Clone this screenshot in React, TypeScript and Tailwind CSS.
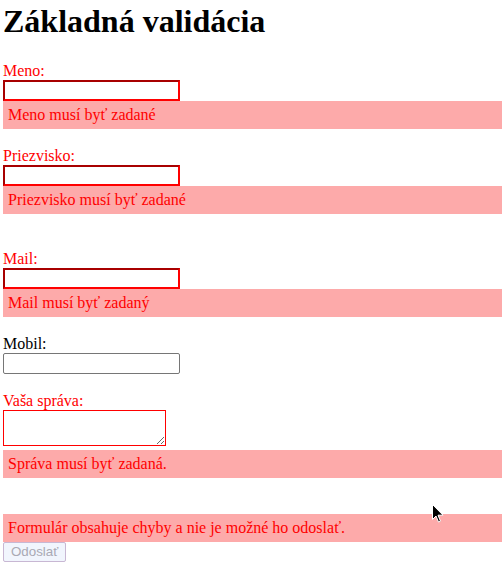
import React from "react"

const serif = "[font-family:'Liberation_Serif','Times_New_Roman',serif]"

function ErrorBox({ text, className = "" }: { text: string; className?: string }) {
  return (
    <div
      className={`bg-[#fdaaaa] text-[#ff0000] px-[5px] py-[5px] text-[16px] leading-[18px] [font-family:'Liberation_Serif','Times_New_Roman',serif] ${className}`}
    >
      {text}
    </div>
  )
}

function Label({ text, error }: { text: string; error?: boolean }) {
  return (
    <label
      className={`block h-[19px] text-[16px] leading-[19px] [font-family:'Liberation_Serif','Times_New_Roman',serif] ${
        error ? "text-[#ff0000]" : "text-black"
      }`}
    >
      {text}
    </label>
  )
}

function BadInput() {
  return (
    <input
      type="text"
      className="block w-[177px] h-[21px] bg-white border-2 border-t-[#a80000] border-l-[#a80000] border-r-[#ff0000] border-b-[#ff0000] outline-none"
    />
  )
}

export default function App() {
  return (
    <div className={`relative w-[502px] min-h-[582px] bg-white pl-[3px] pt-[3px] ${serif} overflow-hidden`}>
      <h1 className="text-[32px] font-bold leading-[37px] mb-[21px] text-black [font-family:'Liberation_Serif','Times_New_Roman',serif]">
        Základná validácia
      </h1>

      <form onSubmit={(e) => e.preventDefault()}>
        <Label text="Meno:" error />
        <BadInput />
        <ErrorBox text="Meno musí byť zadané" className="mb-[17px]" />

        <Label text="Priezvisko:" error />
        <BadInput />
        <ErrorBox text="Priezvisko musí byť zadané" className="mb-[35px]" />

        <Label text="Mail:" error />
        <BadInput />
        <ErrorBox text="Mail musí byť zadaný" className="mb-[17px]" />

        <Label text="Mobil:" />
        <input
          type="text"
          className="block w-[177px] h-[21px] bg-white border border-[#767676] rounded-[2px] outline-none mb-[17px]"
        />

        <Label text="Vaša správa:" error />
        <textarea
          rows={2}
          className="block w-[163px] h-[36px] bg-white border border-[#ff0000] outline-none resize mb-[4px]"
        />
        <ErrorBox text="Správa musí byť zadaná." className="mb-[36px]" />

        <ErrorBox text="Formulár obsahuje chyby a nie je možné ho odoslať." />
        <button
          type="submit"
          disabled
          className="block h-[20px] px-[7px] text-[13.33px] leading-[16px] [font-family:'Liberation_Sans',Arial,sans-serif] text-[#a9a9b4] bg-[#f1f5fd] border border-[#c8b7d3] rounded-[2px]"
        >
          Odoslať
        </button>
      </form>

      <svg className="absolute left-[432px] top-[504px]" width="13" height="20" viewBox="0 0 13 20">
        <polygon
          points="0.5,0.5 0.5,15.5 4,12 6.5,18 8.5,17.2 6,11.2 11,11.2"
          fill="#000"
          stroke="#fff"
          strokeWidth="1"
        />
      </svg>
    </div>
  )
}
